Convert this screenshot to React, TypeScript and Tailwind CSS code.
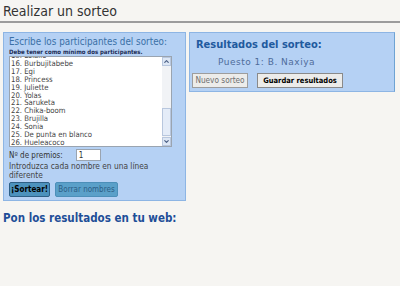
import { ChevronDown, ChevronUp } from "lucide-react";

const names = [
  "15. Lolailo",
  "16. Burbujitabebe",
  "17. Egi",
  "18. Princess",
  "19. Juliette",
  "20. Yolas",
  "21. Saruketa",
  "22. Chika-boom",
  "23. Brujilla",
  "24. Sonia",
  "25. De punta en blanco",
  "26. Hueleacoco",
];

function FakeTextarea() {
  return (
    <div className="relative mt-[1px] h-[91px] w-[163px] overflow-hidden border border-[#9aa4b0] bg-white">
      <div className="-mt-[5px] pl-[1px] pr-[10px] text-[7.7px] leading-[7.9px] text-[#444]">
        {names.map((n) => (
          <div key={n} className="whitespace-nowrap">
            {n}
          </div>
        ))}
      </div>
      {/* scrollbar */}
      <div className="absolute right-0 top-0 flex h-full w-[9px] flex-col bg-[#f1f3f6]">
        <div className="flex h-[9px] items-center justify-center border border-[#b8c7de] bg-[#dde7f5]">
          <ChevronUp className="h-[7px] w-[7px] text-[#4d6185]" strokeWidth={4} />
        </div>
        <div className="flex-1" />
        <div className="mb-[1px] h-[28px] border border-[#b8c7de] bg-[#e4ecf8]" />
        <div className="flex h-[9px] items-center justify-center border border-[#b8c7de] bg-[#dde7f5]">
          <ChevronDown className="h-[7px] w-[7px] text-[#4d6185]" strokeWidth={4} />
        </div>
      </div>
    </div>
  );
}

export default function App() {
  return (
    <div className="h-[286px] w-[400px] overflow-hidden bg-[#f6f5f2] font-['DejaVu_Sans_Condensed','DejaVu_Sans',sans-serif]">
      <h1 className="pl-[3px] pt-[3px] text-[14px] leading-[16px] text-[#333]">Realizar un sorteo</h1>
      <div className="mt-[2px] h-[2px] bg-[#9c9c9c]" />

      <div className="mt-[9px] flex items-start gap-[3px] pl-[3px]">
        <div className="w-[183px] border border-[#8db5e4] bg-[#b5d1f4] pb-[3px] pl-[5px] pt-[4px]">
          <h3 className="text-[9.8px] leading-[10px] text-[#3a70a6]">Escribe los participantes del sorteo:</h3>
          <p className="mt-[1px] text-[6px] font-bold leading-[7px] text-[#1c2c55]">
            Debe tener como mínimo dos participantes.
          </p>
          <FakeTextarea />
          <div className="mt-[2px] flex items-center gap-[13px] text-[8px] leading-[9px] text-[#333]">
            <span>Nº de premios:</span>
            <div className="h-[12px] w-[25px] border border-[#9aa4b0] bg-white pl-[2px] text-[8px] leading-[11px]">1</div>
          </div>
          <p className="mt-[1px] w-[160px] text-[8.3px] leading-[9px] text-[#444]">
            Introduzca cada nombre en una línea diferente
          </p>
          <div className="mt-[2px] flex gap-[5px]">
            <button className="h-[15px] w-[41px] rounded-[2px] border border-[#2e5f86] bg-[#4c92bd] text-[8px] font-bold text-black">
              ¡Sortear!
            </button>
            <button className="h-[15px] w-[63px] rounded-[2px] border border-[#4c8fb9] bg-[#5aa0c9] text-[8px] text-[#2c5e86]">
              Borrar nombres
            </button>
          </div>
        </div>

        <div className="w-[206px] border border-[#8db5e4] border-r-[#6ea3d3] bg-[#b5d1f4] pb-[3px] pl-[2px] pt-[6px]">
          <h3 className="pl-[4px] text-[11px] font-bold leading-[11px] text-[#1f5a9e]">Resultados del sorteo:</h3>
          <p className="mt-[8px] pl-[26px] font-['DejaVu_Sans',sans-serif] text-[9px] leading-[9px] tracking-[0.5px] text-[#4f6c9b]">
            Puesto 1: B. Naxiya
          </p>
          <div className="mt-[6px] flex gap-[9px]">
            <button className="h-[15px] w-[56px] border border-[#9d9d9d] bg-[#ececea] text-[8.2px] text-[#6f6f6f]">
              Nuevo sorteo
            </button>
            <button className="h-[15px] w-[86px] border border-[#8a8a8a] bg-[#ececea] text-[7.5px] font-bold text-black">
              Guardar resultados
            </button>
          </div>
        </div>
      </div>

      <h2 className="mt-[11px] pl-[3px] text-[11.5px] font-bold leading-[12px] text-[#1e4e98]">
        Pon los resultados en tu web:
      </h2>
    </div>
  );
}
